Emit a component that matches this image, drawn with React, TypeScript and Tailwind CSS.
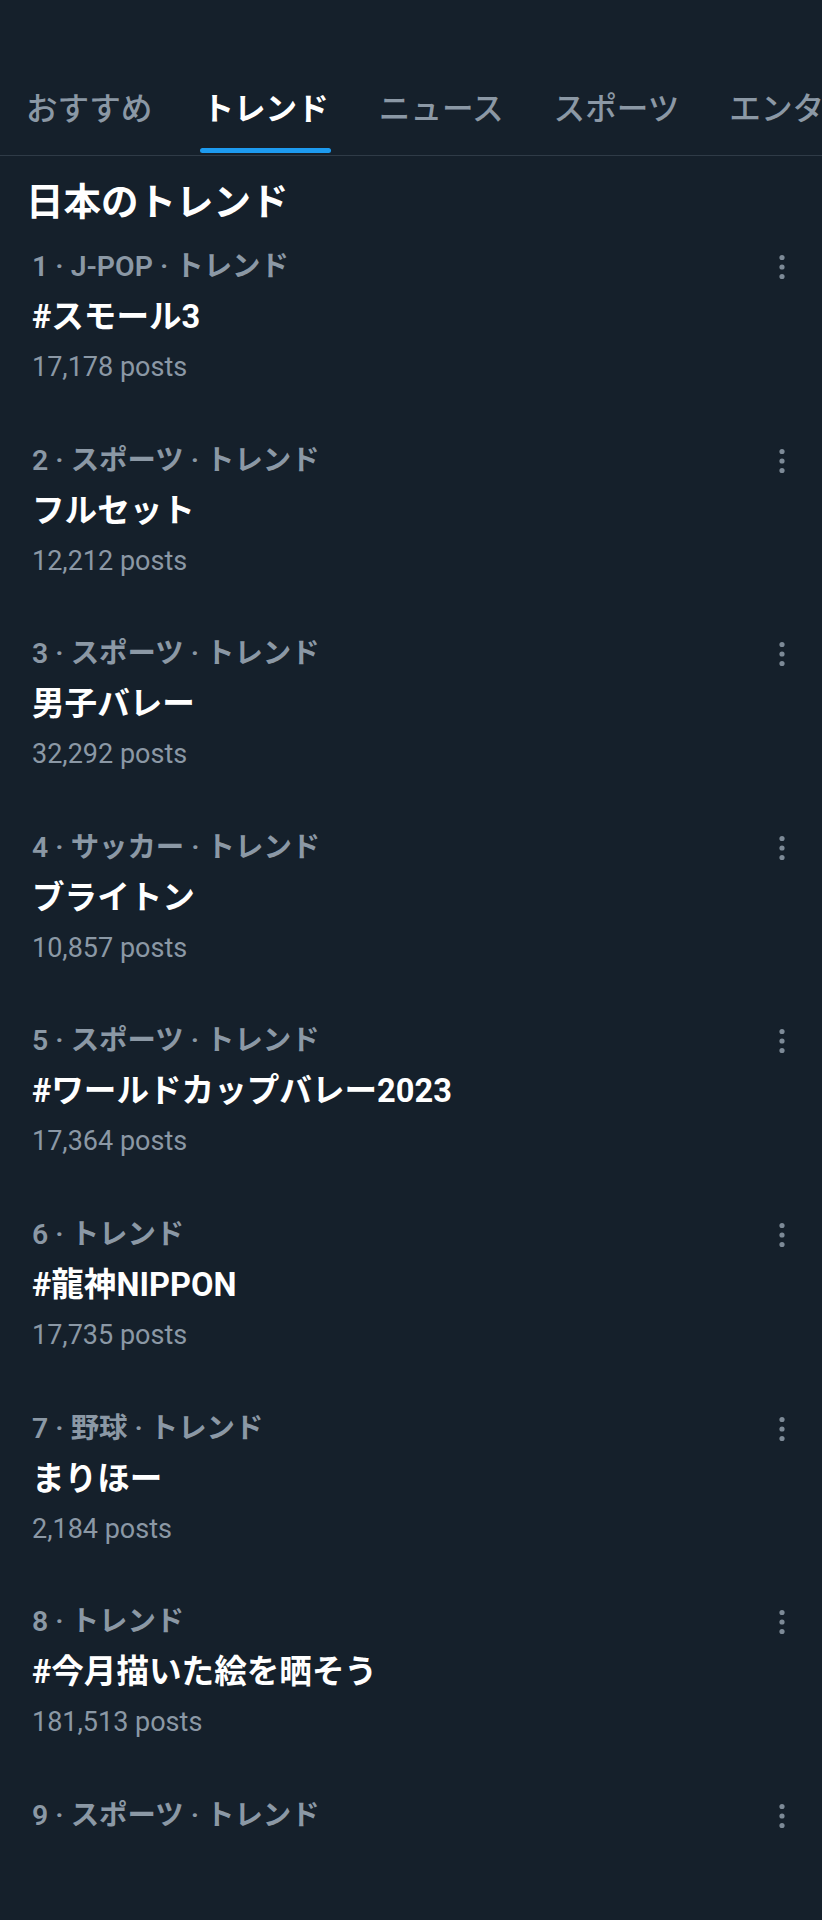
import React from "react";

const tabs = [
  { label: "おすすめ", active: false },
  { label: "トレンド", active: true },
  { label: "ニュース", active: false },
  { label: "スポーツ", active: false },
  { label: "エンタメ", active: false },
];

const trends = [
  { meta: "1 · J-POP · トレンド", name: "#スモール3", posts: "17,178 posts" },
  { meta: "2 · スポーツ · トレンド", name: "フルセット", posts: "12,212 posts" },
  { meta: "3 · スポーツ · トレンド", name: "男子バレー", posts: "32,292 posts" },
  { meta: "4 · サッカー · トレンド", name: "ブライトン", posts: "10,857 posts" },
  { meta: "5 · スポーツ · トレンド", name: "#ワールドカップバレー2023", posts: "17,364 posts" },
  { meta: "6 · トレンド", name: "#龍神NIPPON", posts: "17,735 posts" },
  { meta: "7 · 野球 · トレンド", name: "まりほー", posts: "2,184 posts" },
  { meta: "8 · トレンド", name: "#今月描いた絵を晒そう", posts: "181,513 posts" },
  { meta: "9 · スポーツ · トレンド", name: "", posts: "" },
];

function Dots() {
  return (
    <svg width="20" height="30" viewBox="0 0 20 30" className="shrink-0">
      <circle cx="10" cy="5.5" r="2.6" fill="#7d8a97" />
      <circle cx="10" cy="15" r="2.6" fill="#7d8a97" />
      <circle cx="10" cy="24.5" r="2.6" fill="#7d8a97" />
    </svg>
  );
}

export default function App() {
  return (
    <div className="w-[822px] min-h-[1920px] bg-[#15202b] font-['Roboto','Noto_Sans_CJK_JP',sans-serif] overflow-hidden">
      <div className="flex gap-[50px] pl-[26px] pt-[90px] pb-[2px] border-b border-[#2f3b47] whitespace-nowrap overflow-hidden">
        {tabs.map((t) => (
          <div key={t.label} className="flex flex-col items-stretch shrink-0">
            <div
              className={
                "text-[31.6px] leading-[40px] " +
                (t.active ? "text-white font-semibold" : "text-[#8b98a5] font-medium")
              }
            >
              {t.label}
            </div>
            <div
              className={
                "mt-[18px] h-[5px] rounded-full -mx-[2px] " +
                (t.active ? "bg-[#1d9bf0]" : "bg-transparent")
              }
            />
          </div>
        ))}
      </div>

      <h1 className="mt-[22px] pl-[26px] text-[37.5px] leading-[48px] font-bold text-white">
        日本のトレンド
      </h1>

      <div className="flex flex-col">
        {trends.map((t) => (
          <div key={t.meta} className="pt-[16px] pb-[27.6px] pl-[32px] pr-[30px]">
            <div className="flex items-center justify-between h-[50px]">
              <span className="text-[28.4px] leading-[50px] font-semibold text-[#8b98a5]">
                {t.meta}
              </span>
              <Dots />
            </div>
            {t.name && (
              <div className="text-[32.6px] leading-[50px] font-bold text-white">{t.name}</div>
            )}
            {t.posts && (
              <div className="text-[27px] leading-[50px] text-[#8b98a5]">{t.posts}</div>
            )}
          </div>
        ))}
      </div>
    </div>
  );
}
